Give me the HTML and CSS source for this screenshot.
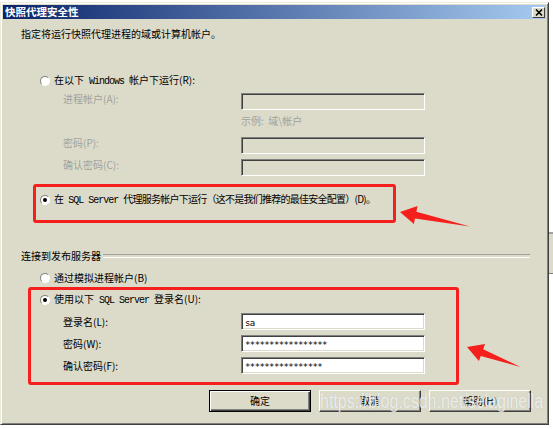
FILE: index.html
```html
<!DOCTYPE html>
<html lang="zh-CN">
<head>
  <meta charset="UTF-8">
  <meta name="viewport" content="width=device-width, initial-scale=1.0">
  <title>快照代理安全性</title>
  <link rel="stylesheet" href="styles.css">
</head>
<body>
  <div class="dialog">
    <div class="titlebar">
      <span class="title">快照代理安全性</span>
      <span class="close">
        <svg width="8" height="7" viewBox="0 0 8 7"><path d="M1 0.5 L7 6.5 M7 0.5 L1 6.5" stroke="#000" stroke-width="1.6"/></svg>
      </span>
    </div>

    <div class="content">
      <p class="intro">指定将运行快照代理进程的域或计算机帐户。</p>

      <div class="radio-row r1">
        <span class="radio"></span>
        <span>在以下<span class="en"> Windows </span>帐户下运行(<u>R</u>):</span>
      </div>

      <div class="field off f1">
        <span class="lbl">进程帐户(<u>A</u>):</span>
        <span class="box"></span>
      </div>
      <p class="hint">示例:&nbsp;&nbsp;域\帐户</p>
      <div class="field off f2">
        <span class="lbl">密码(<u>P</u>):</span>
        <span class="box"></span>
      </div>
      <div class="field off f3">
        <span class="lbl">确认密码(<u>C</u>):</span>
        <span class="box"></span>
      </div>

      <div class="radio-row r2">
        <span class="radio on"></span>
        <span class="tight">在<span class="en"> SQL Server </span>代理服务帐户下运行（这不是我们推荐的最佳安全配置）(<u>D</u>)。</span>
      </div>

      <div class="group">连接到发布服务器</div>

      <div class="radio-row r3">
        <span class="radio"></span>
        <span>通过模拟进程帐户(<u>B</u>)</span>
      </div>
      <div class="radio-row r4">
        <span class="radio on"></span>
        <span>使用以下<span class="en"> SQL Server </span>登录名(<u>U</u>):</span>
      </div>

      <div class="field f4">
        <span class="lbl">登录名(<u>L</u>):</span>
        <span class="box on">sa</span>
      </div>
      <div class="field f5">
        <span class="lbl">密码(<u>W</u>):</span>
        <span class="box on">*****************</span>
      </div>
      <div class="field f6">
        <span class="lbl">确认密码(<u>F</u>):</span>
        <span class="box on">****************</span>
      </div>

      <div class="buttons">
        <span class="btn default">确定</span>
        <span class="btn">取消</span>
        <span class="btn">帮助(<u>H</u>)</span>
      </div>
    </div>
  </div>

  <!-- bit of the window behind the dialog -->
  <div class="behind"></div>

  <!-- annotations drawn over the screenshot -->
  <div class="mark mark-a"></div>
  <div class="mark mark-b"></div>
  <svg class="arrows" width="553" height="429" viewBox="0 0 553 429">
    <polygon points="400,212 417.5,206 416.4,211.7 470,226.5 415,218.5 413.9,224"/>
    <polygon points="467,347 485,344 483.2,349.3 520.5,367 480.8,355.9 478.9,361"/>
  </svg>
  <div class="watermark">https://blog.csdn.net/selaginella</div>
</body>
</html>
```

FILE: styles.css
```css
* {
  margin: 0;
  padding: 0;
  box-sizing: border-box;
}

html, body {
  width: 553px;
  height: 429px;
  overflow: hidden;
}

body {
  position: relative;
  background-color: #fff;
  font-family: "Noto Sans CJK SC", "Liberation Sans", sans-serif;
  font-size: 10px;
  line-height: 14px;
  color: #000;
}

.dialog {
  width: 549px;
  height: 423px;
  margin-top: 2px;
  padding: 2px;
  border: 1px solid;
  border-color: #ecebe0 #404040 #404040 #ecebe0;
  box-shadow: inset 1px 1px #fff, inset -1px -1px #808080;
  background-color: #dcdbca;
}

.titlebar {
  display: flex;
  align-items: center;
  justify-content: space-between;
  height: 14px;
  padding: 0 1px;
  background: linear-gradient(to right, #0a246a, #a6caf0);
}

.title {
  padding-left: 1px;
  color: #fff;
  font-weight: bold;
  font-size: 10.5px;
}

.close {
  display: flex;
  align-items: center;
  justify-content: center;
  width: 13px;
  height: 11px;
  border: 1px solid;
  border-color: #fff #404040 #404040 #fff;
  background-color: #dcdbca;
}

.en {
  font-family: "Liberation Mono", monospace;
  letter-spacing: -1px;
  white-space: pre;
}

.tight {
  letter-spacing: -.75px;
}

u {
  text-decoration: none;
}

.intro {
  margin-top: 8px;
  padding-left: 18px;
}

.radio-row {
  display: flex;
  align-items: center;
  height: 14px;
  padding-left: 37px;
  white-space: nowrap;
}

.radio {
  display: flex;
  align-items: center;
  justify-content: center;
  width: 10px;
  height: 10px;
  margin-right: 4px;
  border: 1px solid;
  border-color: #808080 #fff #fff #808080;
  border-radius: 50%;
  background-color: #fff;
}

.radio.on::after {
  content: '';
  display: block;
  width: 4px;
  height: 4px;
  border-radius: 50%;
  background-color: #000;
}

.field {
  display: flex;
  align-items: center;
  height: 17px;
  padding-left: 60px;
}

.field .lbl {
  width: 178px;
}

.field.off .lbl {
  padding-bottom: 5px;
  color: #a2a29a;
}

.box {
  display: flex;
  align-items: center;
  width: 184px;
  height: 17px;
  border: 1px solid;
  border-color: #808080 #fff #fff #808080;
  box-shadow: inset 1px 1px #404040, inset -1px -1px #dcdbca;
  background-color: #dcdbca;
}

.box.on {
  padding: 2px 0 0 3px;
  background-color: #fff;
  font-family: "DejaVu Sans Mono", monospace;
  font-size: 9px;
  letter-spacing: -0.6px;
}

.hint {
  margin-top: 4px;
  padding-left: 238px;
  color: #a2a29a;
}

.r1 { margin-top: 33px; }
.f1 { margin-top: 5px; }
.f2 { margin-top: 9px; }
.f3 { margin-top: 5px; }
.r2 { margin-top: 17px; }
.r3 { margin-top: 8px; }
.r4 { margin-top: 8px; }
.f4 { margin-top: 6px; }
.f5 { margin-top: 5px; }
.f6 { margin-top: 5px; }

.group {
  display: flex;
  align-items: center;
  height: 14px;
  margin-top: 42px;
  padding: 0 16px 0 18px;
}

.group::after {
  content: '';
  flex: 1;
  height: 2px;
  margin-left: 2px;
  border-top: 1px solid #a0a09a;
  border-bottom: 1px solid #fff;
}

.buttons {
  display: flex;
  justify-content: flex-end;
  gap: 8px;
  margin-top: 16px;
  padding-right: 15px;
}

.btn {
  display: flex;
  align-items: center;
  justify-content: center;
  width: 102px;
  height: 22px;
  border: 1px solid;
  border-color: #fff #404040 #404040 #fff;
  box-shadow: inset -1px -1px #808080;
}

.btn.default {
  border-color: #000;
  box-shadow: inset 1px 1px #fff, inset -1px -1px #404040, inset -2px -2px #808080;
}

.behind {
  position: absolute;
  left: 549px;
  top: 232px;
  width: 4px;
  height: 42px;
  border-top: 1px solid #a0a0a0;
  border-bottom: 1px solid #808080;
  box-shadow: inset 0 13px 0 -12px #a0a0a0;
  background-color: #dcdbca;
}

.mark {
  position: absolute;
  border: 3px solid #f5201d;
  border-radius: 3px;
}

.mark-a {
  left: 33px;
  top: 184px;
  width: 363px;
  height: 39px;
}

.mark-b {
  left: 28px;
  top: 287px;
  width: 431px;
  height: 98px;
}

.arrows {
  position: absolute;
  left: 0;
  top: 0;
  fill: #f5201d;
  pointer-events: none;
}

.watermark {
  position: absolute;
  left: 320px;
  top: 391px;
  font-family: "Liberation Sans", Arial, sans-serif;
  font-size: 20px;
  line-height: 20px;
  white-space: nowrap;
  color: rgba(255, 255, 255, .75);
  text-shadow: 0 0 1px rgba(120, 120, 120, .4);
  transform: scaleX(.8);
  transform-origin: 0 0;
}
```
